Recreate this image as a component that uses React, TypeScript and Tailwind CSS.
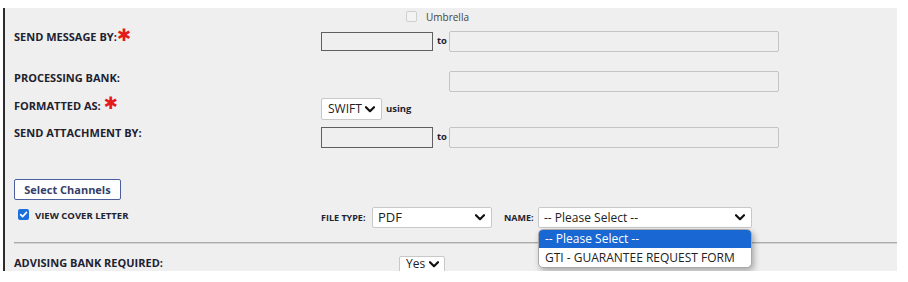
import React from 'react';

const Chevron: React.FC<{ className?: string }> = ({ className = '' }) => (
  <svg viewBox="0 0 10 7" className={`w-[10px] h-[7px] ${className}`}>
    <path d="M1 1.2 L5 5.2 L9 1.2" fill="none" stroke="#111" strokeWidth="2.2" strokeLinecap="round" strokeLinejoin="round" />
  </svg>
);

const Star: React.FC = () => (
  <span className="text-[#e31b1b] text-[17px] leading-[14px] font-['DejaVu_Sans',sans-serif] font-bold -mt-[2px]">✱</span>
);

const Label: React.FC<{ children: React.ReactNode }> = ({ children }) => (
  <div className="w-[307px] shrink-0 text-[11px] leading-[14px] font-bold text-[#1e2230] flex items-start">
    {children}
  </div>
);

const DarkInput: React.FC<{ h?: string }> = ({ h = 'h-[19px]' }) => (
  <div className={`w-[112px] ${h} border border-[#5f5f5f] bg-[#efefef]`} />
);

const LightInput: React.FC = () => (
  <div className="w-[330px] h-[21px] border border-[#c4c4c4] rounded-[2px] bg-[#efefef]" />
);

const To: React.FC = () => (
  <span className="w-[16px] pl-[4px] text-[9.5px] font-bold text-[#1e2230]">to</span>
);

const SelectBox: React.FC<{ value: string; width: string; textSize?: string }> = ({ value, width, textSize = 'text-[12px]' }) => (
  <div className={`${width} h-[21px] bg-white border border-[#c8c8c8] rounded-[2px] flex items-center justify-between pl-[5px] pr-[6px] ${textSize} text-[#222]`}>
    <span>{value}</span>
    <Chevron />
  </div>
);

export default function App() {
  return (
    <div className="w-[908px] h-[282px] bg-white pt-[8px] pl-[3px] font-['Open_Sans',sans-serif]">
      <div className="relative w-[894px] h-[263px] bg-[#efefef] border-l-2 border-[#2b2b2b] pl-[9px] overflow-hidden">
        {/* umbrella */}
        <div className="h-[22px] flex">
          <div className="w-[307px] shrink-0" />
          <div className="pl-[85px] pt-[3px] flex items-start">
            <div className="w-[11px] h-[11px] border border-[#cfcfcf] rounded-[2px] bg-[#f3f3f3]" />
            <span className="ml-[9px] text-[10px] leading-[12px] text-[#444]">Umbrella</span>
          </div>
        </div>

        {/* send message by */}
        <div className="h-[22px] flex">
          <Label>
            <span>SEND MESSAGE BY:</span>
            <Star />
          </Label>
          <div className="flex items-center">
            <DarkInput />
            <To />
            <LightInput />
          </div>
        </div>

        {/* processing bank */}
        <div className="mt-[19px] h-[21px] flex">
          <Label>PROCESSING BANK:</Label>
          <div className="pl-[128px]">
            <LightInput />
          </div>
        </div>

        {/* formatted as */}
        <div className="mt-[6px] h-[22px] flex">
          <Label>
            <span className="pt-[1px]">FORMATTED AS:&nbsp;</span>
            <Star />
          </Label>
          <div className="flex items-center">
            <div className="w-[61px] h-[22px] bg-white border border-[#c8c8c8] rounded-[2px] flex items-center justify-between pl-[6px] pr-[6px] text-[12px] text-[#222]">
              <span>SWIFT</span>
              <Chevron />
            </div>
            <span className="ml-[4px] text-[9.5px] font-bold text-[#1e2230]">using</span>
          </div>
        </div>

        {/* send attachment by */}
        <div className="mt-[6px] h-[22px] flex">
          <Label>SEND ATTACHMENT BY:</Label>
          <div className="flex items-center">
            <DarkInput h="h-[21px]" />
            <To />
            <LightInput />
          </div>
        </div>

        {/* select channels */}
        <div className="mt-[28px] h-[21px]">
          <button className="w-[107px] h-[21px] bg-white border border-[#4a5f9c] rounded-[2px] text-[11px] font-bold text-[#34406a] leading-none">
            Select Channels
          </button>
        </div>

        {/* cover letter */}
        <div className="mt-[10px] h-[21px] flex">
          <div className="w-[307px] shrink-0 flex items-start pl-[4px] pt-[2px]">
            <div className="w-[11px] h-[11px] rounded-[2px] bg-[#1a6fdc] flex items-center justify-center">
              <svg viewBox="0 0 10 10" className="w-[9px] h-[9px]">
                <path d="M1.8 5.2 L4 7.4 L8.3 2.6" fill="none" stroke="white" strokeWidth="1.8" strokeLinecap="round" strokeLinejoin="round" />
              </svg>
            </div>
            <span className="ml-[6px] mt-[1px] text-[9.5px] leading-[12px] font-bold text-[#1e2230]">VIEW COVER LETTER</span>
          </div>
          <div className="flex items-center">
            <span className="w-[51px] text-[9px] font-bold text-[#1e2230]">FILE TYPE:</span>
            <SelectBox value="PDF" width="w-[120px]" textSize="text-[13px]" />
            <span className="ml-[12px] w-[34px] text-[9px] font-bold text-[#1e2230]">NAME:</span>
            <div className="relative">
              <SelectBox value="-- Please Select --" width="w-[214px]" />
              <div className="absolute z-10 left-0 top-[22px] w-[214px] bg-white border border-[#a9a9a9] rounded-[5px] shadow-[2px_3px_6px_rgba(0,0,0,0.3)] overflow-hidden text-[12px] leading-[18px]">
                <div className="h-[18px] bg-[#1967d2] text-white pl-[6px]">-- Please Select --</div>
                <div className="h-[19px] text-[#222] pl-[6px] pt-[1px]">GTI - GUARANTEE REQUEST FORM</div>
              </div>
            </div>
          </div>
        </div>

        {/* divider */}
        <div className="mt-[14px] h-[2px] bg-[#ababab] border-b border-[#d4d4d4]" />

        {/* advising bank */}
        <div className="mt-[12px] flex">
          <Label>ADVISING BANK REQUIRED:</Label>
          <div className="pl-[78px]">
            <div className="w-[46px] h-[22px] bg-white border border-[#c8c8c8] rounded-[2px] flex items-start justify-between pl-[6px] pr-[5px] pt-[1px] text-[12px] leading-[12px] text-[#222]">
              <span>Yes</span>
              <Chevron className="mt-[3px]" />
            </div>
          </div>
        </div>
      </div>
    </div>
  );
}
